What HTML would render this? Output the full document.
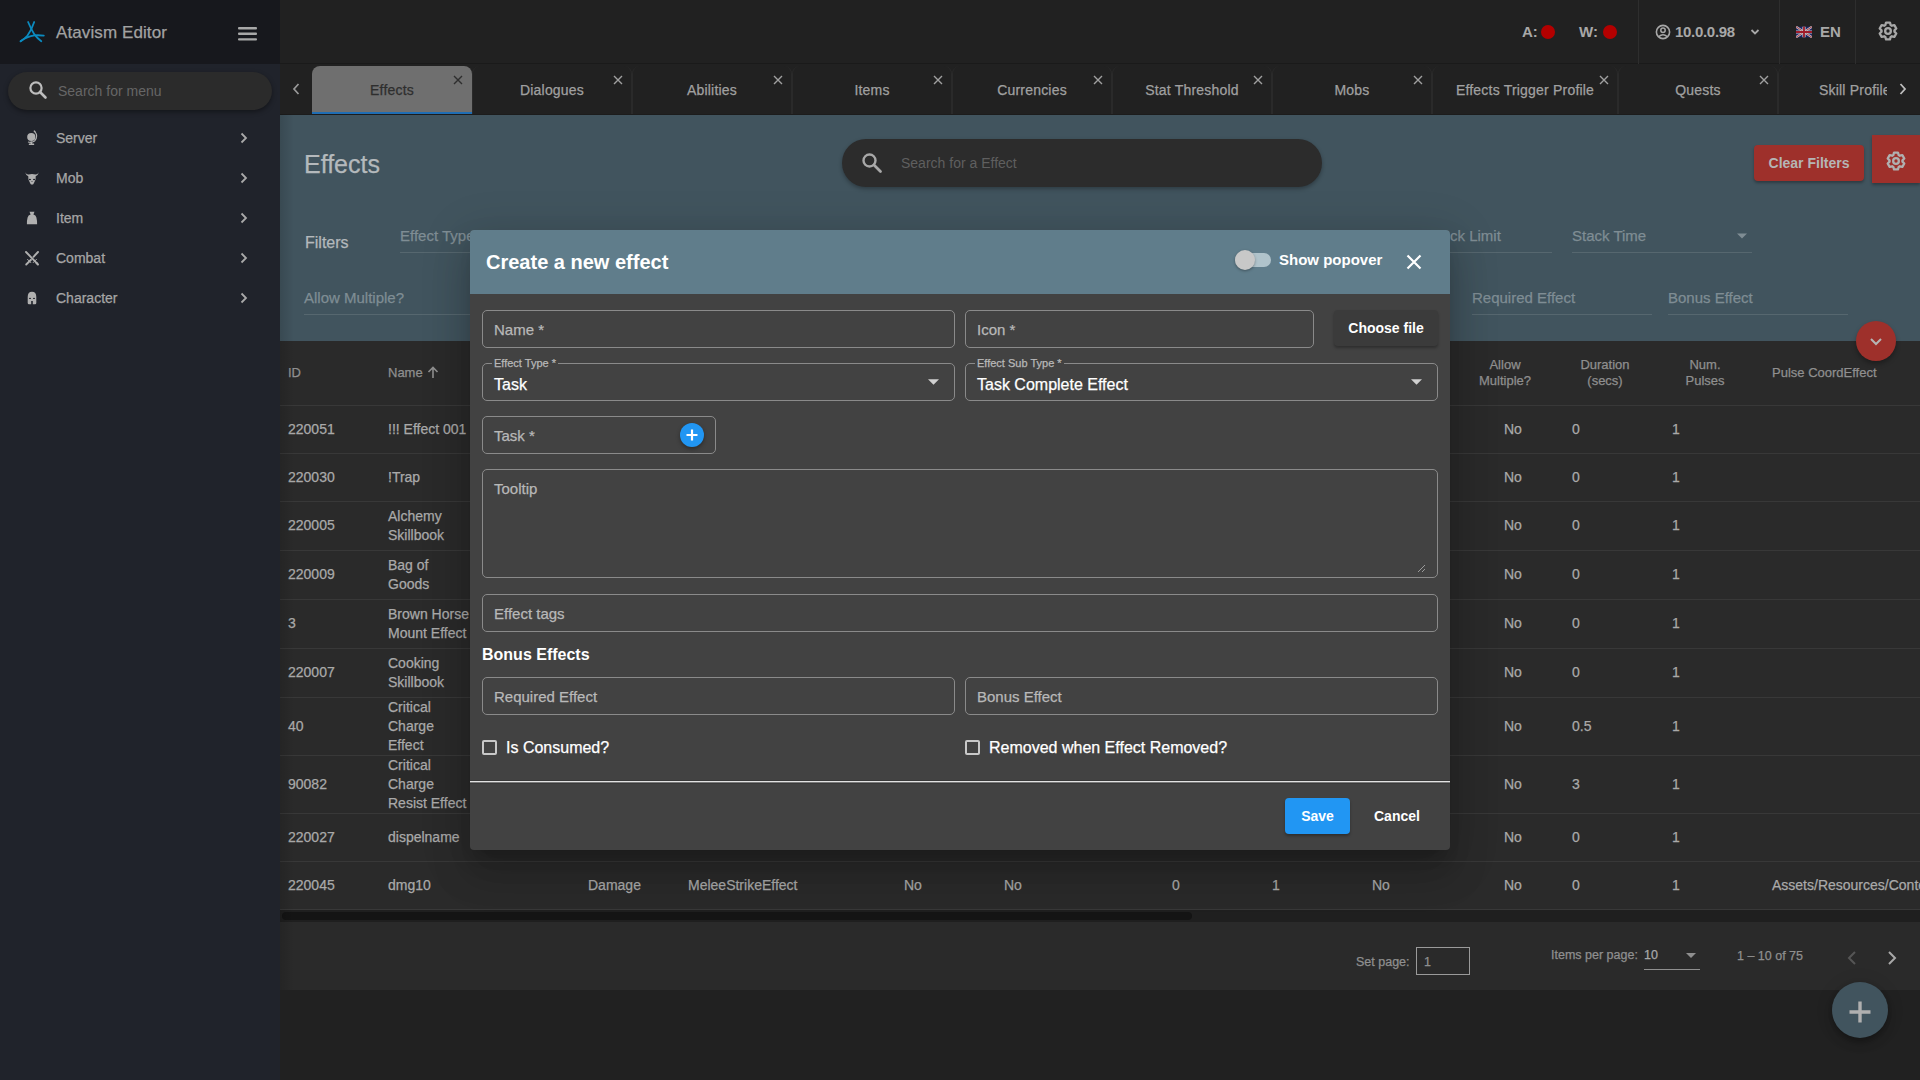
<!DOCTYPE html>
<html><head><meta charset="utf-8">
<style>
*{box-sizing:border-box;margin:0;padding:0}
html,body{width:1920px;height:1080px;overflow:hidden;background:#212121;font-family:"Liberation Sans",sans-serif;-webkit-font-smoothing:antialiased}
.a{position:absolute;white-space:nowrap;line-height:1}
body div{-webkit-text-stroke:0.25px currentColor}
body div[style*="bold"]{-webkit-text-stroke:0}
.mi{position:absolute;left:56px;font-size:14px;color:#a6a6a6;line-height:1;white-space:nowrap}
.vsep{position:absolute;top:0;width:1px;height:64px;background:#2e2e2e}
.tab{position:absolute;top:66px;height:48px;border-radius:8px 8px 0 0;border-left:1px solid #2a2a2a;border-right:1px solid #2a2a2a;background:#212121}
.tl{position:absolute;font-size:14px;color:#a0a0a0;line-height:1;white-space:nowrap;letter-spacing:0.2px}
.rb{position:absolute;left:280px;width:1640px;height:1px;background:#383838}
.td{position:absolute;font-size:14px;color:#a9a9a9;line-height:19px;white-space:nowrap}
.th{position:absolute;font-size:13px;color:#8f8f8f;line-height:16px;white-space:nowrap;text-align:center}
.fld{position:absolute;border:1px solid #8a8a8a;border-radius:5px}
.ph{position:absolute;font-size:15px;color:#b8b8b8;line-height:1;white-space:nowrap}
</style></head><body>
<div class="a" style="left:0;top:0;width:280px;height:1080px;background:#20232b"></div>
<div class="a" style="left:0;top:0;width:280px;height:64px;background:#17181d"></div>
<svg class="a" style="left:15px;top:16px" width="35" height="30" viewBox="15 16 35 30"><g fill="none" stroke="#0b8abf" stroke-width="1.8" stroke-linecap="round"><path d="M28.1 22 Q31 29 34.4 34.4 Q37.5 38.5 41.3 41.2"/><path d="M34.2 22 Q31.8 29.5 27.5 35.5 Q24.5 39 20.6 41.3"/><path d="M20.6 41.3 Q27 36.5 34.5 35.4 Q39 35 43.8 35.7"/></g></svg>
<div class="a" style="left:56px;top:24px;font-size:17px;color:#a2a2a2;letter-spacing:0.1px">Atavism Editor</div>
<svg class="a" style="left:238px;top:27px" width="20" height="14"><g fill="#a8a8a8"><rect x="0" y="0" width="19" height="2.4" rx="1"/><rect x="0" y="5.6" width="19" height="2.4" rx="1"/><rect x="0" y="11.2" width="19" height="2.4" rx="1"/></g></svg>
<div class="a" style="left:8px;top:72px;width:264px;height:38px;border-radius:19px;background:#2b2b2b;box-shadow:0 2px 5px rgba(0,0,0,.4)"></div>
<svg class="a" style="left:28px;top:80px" width="20" height="20" viewBox="0 0 20 20"><circle cx="8" cy="8" r="5.6" fill="none" stroke="#bdbdbd" stroke-width="2.2"/><path d="M12 12 L17.5 17.5" stroke="#bdbdbd" stroke-width="2.6" stroke-linecap="round"/></svg>
<div class="a" style="left:58px;top:84px;font-size:14px;color:#666;-webkit-text-stroke:0">Search for menu</div>
<svg class="a" style="left:20px;top:125px" width="25" height="25" viewBox="20 125 25 25"><g fill="#b0b0b0"><circle cx="31.3" cy="137" r="4.1"/><rect x="30.6" y="141.5" width="1.6" height="2.6"/><rect x="28.8" y="143.6" width="5.4" height="1.5" rx="0.5"/></g><path d="M34.5 131.2 Q38.8 136.5 34.6 141 Q31.5 143 28 142" fill="none" stroke="#b0b0b0" stroke-width="1.1"/><path d="M34 130.6 L35 132" stroke="#b0b0b0" stroke-width="1.4"/></svg>
<div class="mi" style="top:131px">Server</div>
<svg class="a" style="left:240px;top:132px" width="8" height="12" viewBox="0 0 8 12"><path d="M1.5 1.5 L6 6 L1.5 10.5" fill="none" stroke="#a9a9a9" stroke-width="1.8"/></svg>
<svg class="a" style="left:20px;top:165px" width="25" height="25" viewBox="20 165 25 25"><path fill="#b0b0b0" d="M25.2 172.2 Q26 175.5 28.3 176.2 L28.4 179.5 L30.3 183.5 L31 184.4 L33 184.4 L33.7 183.5 L35.6 179.5 L35.7 176.2 Q38 175.5 38.8 172.2 Q37.5 174.6 35.5 174.4 Q32 173.6 28.5 174.4 Q26.5 174.6 25.2 172.2Z"/><g fill="#20232b"><ellipse cx="29.9" cy="179.5" rx="1.1" ry="0.8"/><ellipse cx="34.1" cy="179.5" rx="1.1" ry="0.8"/><rect x="31.4" y="181.2" width="1.2" height="0.6"/></g></svg>
<div class="mi" style="top:171px">Mob</div>
<svg class="a" style="left:240px;top:172px" width="8" height="12" viewBox="0 0 8 12"><path d="M1.5 1.5 L6 6 L1.5 10.5" fill="none" stroke="#a9a9a9" stroke-width="1.8"/></svg>
<svg class="a" style="left:20px;top:205px" width="25" height="25" viewBox="20 205 25 25"><path fill="#b0b0b0" d="M29.5 211.8 L34.5 211.8 L33.4 214.6 Q35.8 215.2 36.4 217.5 Q37.2 220.5 37.1 224.2 L26.9 224.2 Q26.8 220.5 27.6 217.5 Q28.2 215.2 30.6 214.6Z"/></svg>
<div class="mi" style="top:211px">Item</div>
<svg class="a" style="left:240px;top:212px" width="8" height="12" viewBox="0 0 8 12"><path d="M1.5 1.5 L6 6 L1.5 10.5" fill="none" stroke="#a9a9a9" stroke-width="1.8"/></svg>
<svg class="a" style="left:20px;top:245px" width="25" height="25" viewBox="20 245 25 25"><g stroke="#b0b0b0" stroke-linecap="round"><path d="M26 252 L36.5 262.8" stroke-width="1.9"/><path d="M38 252 L33.5 256.8" stroke-width="1.9"/><path d="M31 259.8 L26.2 264.5" stroke-width="1.9"/><path d="M27.6 259.4 L30.8 262.6 M36.4 259.4 L33.2 262.6" stroke-width="1"/><path d="M36.6 263 L37.9 264.4" stroke-width="2.2"/></g></svg>
<div class="mi" style="top:251px">Combat</div>
<svg class="a" style="left:240px;top:252px" width="8" height="12" viewBox="0 0 8 12"><path d="M1.5 1.5 L6 6 L1.5 10.5" fill="none" stroke="#a9a9a9" stroke-width="1.8"/></svg>
<svg class="a" style="left:20px;top:285px" width="25" height="25" viewBox="20 285 25 25"><path fill="#b0b0b0" d="M27.7 297 Q27.7 291.8 32 291.8 Q36.3 291.8 36.3 297 L36.3 303 Q36.3 304.2 35 304.2 L32.8 304.2 L32.8 301 L31.2 301 L31.2 304.2 L29 304.2 Q27.7 304.2 27.7 303Z"/><g fill="#20232b"><ellipse cx="30" cy="298.4" rx="1" ry="0.6"/><ellipse cx="34" cy="298.4" rx="1" ry="0.6"/></g></svg>
<div class="mi" style="top:291px">Character</div>
<svg class="a" style="left:240px;top:292px" width="8" height="12" viewBox="0 0 8 12"><path d="M1.5 1.5 L6 6 L1.5 10.5" fill="none" stroke="#a9a9a9" stroke-width="1.8"/></svg>
<div class="a" style="left:280px;top:0;width:1640px;height:64px;background:#212121"></div>
<div class="a" style="left:280px;top:63px;width:1640px;height:1px;background:#1a1a1a"></div>
<div class="vsep" style="left:1638px"></div>
<div class="vsep" style="left:1779px"></div>
<div class="vsep" style="left:1855px"></div>
<div class="a" style="left:1522px;top:24px;font-size:15px;font-weight:bold;color:#a8a8a8">A:</div>
<div class="a" style="left:1541px;top:25px;width:14px;height:14px;border-radius:50%;background:#b30000"></div>
<div class="a" style="left:1579px;top:24px;font-size:15px;font-weight:bold;color:#a8a8a8">W:</div>
<div class="a" style="left:1603px;top:25px;width:14px;height:14px;border-radius:50%;background:#b30000"></div>
<svg class="a" style="left:1655px;top:24px" width="16" height="16" viewBox="0 0 16 16"><circle cx="8" cy="8" r="6.6" fill="none" stroke="#a8a8a8" stroke-width="1.6"/><circle cx="8" cy="6.2" r="2.2" fill="none" stroke="#a8a8a8" stroke-width="1.5"/><path d="M3.8 12.6 Q8 8.8 12.2 12.6" fill="none" stroke="#a8a8a8" stroke-width="1.5"/></svg>
<div class="a" style="left:1675px;top:24px;font-size:15px;font-weight:bold;color:#a8a8a8;letter-spacing:-0.3px">10.0.0.98</div>
<svg class="a" style="left:1750px;top:28px" width="10" height="8" viewBox="0 0 10 8"><path d="M1.5 2 L5 5.5 L8.5 2" fill="none" stroke="#a8a8a8" stroke-width="1.8"/></svg>
<svg class="a" style="left:1796px;top:26px" width="16" height="12" viewBox="0 0 60 40"><rect width="60" height="40" fill="#1a2466"/><path d="M0 0 L60 40 M60 0 L0 40" stroke="#c8c8c8" stroke-width="8"/><path d="M0 0 L60 40 M60 0 L0 40" stroke="#a01c2a" stroke-width="3"/><path d="M30 0 V40 M0 20 H60" stroke="#c8c8c8" stroke-width="12"/><path d="M30 0 V40 M0 20 H60" stroke="#a01c2a" stroke-width="7"/></svg>
<div class="a" style="left:1820px;top:24px;font-size:15px;font-weight:bold;color:#a8a8a8">EN</div>
<svg class="a" style="left:1878px;top:21px" width="20" height="20" viewBox="0 0 24 24"><path d="M15.17 4.87 L14.34 1.87 L9.66 1.87 L8.83 4.87 L7.42 5.69 L4.39 4.91 L2.05 8.96 L4.24 11.18 L4.24 12.82 L2.05 15.04 L4.39 19.09 L7.42 18.31 L8.83 19.13 L9.66 22.13 L14.34 22.13 L15.17 19.13 L16.58 18.31 L19.61 19.09 L21.95 15.04 L19.76 12.82 L19.76 11.18 L21.95 8.96 L19.61 4.91 L16.58 5.69Z" fill="none" stroke="#a8a8a8" stroke-width="2.8" stroke-linejoin="round"/><circle cx="12" cy="12" r="3.4" fill="none" stroke="#a8a8a8" stroke-width="2.8"/></svg>
<div class="a" style="left:280px;top:64px;width:1640px;height:50px;background:#212121"></div>
<svg class="a" style="left:291px;top:82px" width="10" height="14" viewBox="0 0 10 14"><path d="M7.5 2 L3 7 L7.5 12" fill="none" stroke="#9a9a9a" stroke-width="1.7"/></svg>
<div class="tab" style="left:312px;width:160px;background:#6f6f6f;border:none;"></div>
<div class="tl" style="left:312px;width:160px;top:83px;text-align:center;color:#2e2e2e">Effects</div>
<svg class="a" style="left:453px;top:75px" width="10" height="10" viewBox="0 0 10 10"><path d="M1 1 L9 9 M9 1 L1 9" stroke="#2e2e2e" stroke-width="1.4"/></svg>
<div class="tab" style="left:472px;width:160px;background:#212121;"></div>
<div class="tl" style="left:472px;width:160px;top:83px;text-align:center;color:#a0a0a0">Dialogues</div>
<svg class="a" style="left:613px;top:75px" width="10" height="10" viewBox="0 0 10 10"><path d="M1 1 L9 9 M9 1 L1 9" stroke="#a0a0a0" stroke-width="1.4"/></svg>
<div class="tab" style="left:632px;width:160px;background:#212121;"></div>
<div class="tl" style="left:632px;width:160px;top:83px;text-align:center;color:#a0a0a0">Abilities</div>
<svg class="a" style="left:773px;top:75px" width="10" height="10" viewBox="0 0 10 10"><path d="M1 1 L9 9 M9 1 L1 9" stroke="#a0a0a0" stroke-width="1.4"/></svg>
<div class="tab" style="left:792px;width:160px;background:#212121;"></div>
<div class="tl" style="left:792px;width:160px;top:83px;text-align:center;color:#a0a0a0">Items</div>
<svg class="a" style="left:933px;top:75px" width="10" height="10" viewBox="0 0 10 10"><path d="M1 1 L9 9 M9 1 L1 9" stroke="#a0a0a0" stroke-width="1.4"/></svg>
<div class="tab" style="left:952px;width:160px;background:#212121;"></div>
<div class="tl" style="left:952px;width:160px;top:83px;text-align:center;color:#a0a0a0">Currencies</div>
<svg class="a" style="left:1093px;top:75px" width="10" height="10" viewBox="0 0 10 10"><path d="M1 1 L9 9 M9 1 L1 9" stroke="#a0a0a0" stroke-width="1.4"/></svg>
<div class="tab" style="left:1112px;width:160px;background:#212121;"></div>
<div class="tl" style="left:1112px;width:160px;top:83px;text-align:center;color:#a0a0a0">Stat Threshold</div>
<svg class="a" style="left:1253px;top:75px" width="10" height="10" viewBox="0 0 10 10"><path d="M1 1 L9 9 M9 1 L1 9" stroke="#a0a0a0" stroke-width="1.4"/></svg>
<div class="tab" style="left:1272px;width:160px;background:#212121;"></div>
<div class="tl" style="left:1272px;width:160px;top:83px;text-align:center;color:#a0a0a0">Mobs</div>
<svg class="a" style="left:1413px;top:75px" width="10" height="10" viewBox="0 0 10 10"><path d="M1 1 L9 9 M9 1 L1 9" stroke="#a0a0a0" stroke-width="1.4"/></svg>
<div class="tab" style="left:1432px;width:186px;background:#212121;"></div>
<div class="tl" style="left:1432px;width:186px;top:83px;text-align:center;color:#a0a0a0">Effects Trigger Profile</div>
<svg class="a" style="left:1599px;top:75px" width="10" height="10" viewBox="0 0 10 10"><path d="M1 1 L9 9 M9 1 L1 9" stroke="#a0a0a0" stroke-width="1.4"/></svg>
<div class="tab" style="left:1618px;width:160px;background:#212121;"></div>
<div class="tl" style="left:1618px;width:160px;top:83px;text-align:center;color:#a0a0a0">Quests</div>
<svg class="a" style="left:1759px;top:75px" width="10" height="10" viewBox="0 0 10 10"><path d="M1 1 L9 9 M9 1 L1 9" stroke="#a0a0a0" stroke-width="1.4"/></svg>
<div class="tab" style="left:1778px;width:160px;background:#212121;"></div>
<div class="tl" style="left:1819px;top:83px;color:#a0a0a0">Skill Profile</div>
<div class="a" style="left:312px;top:112px;width:160px;height:2px;background:#1f6db3"></div>
<div class="a" style="left:1887px;top:64px;width:33px;height:50px;background:#212121"></div>
<svg class="a" style="left:1898px;top:82px" width="10" height="14" viewBox="0 0 10 14"><path d="M2.5 2 L7 7 L2.5 12" fill="none" stroke="#bdbdbd" stroke-width="1.8"/></svg>
<div class="a" style="left:280px;top:114px;width:1640px;height:1px;background:#1c1c1c"></div>
<div class="a" style="left:280px;top:115px;width:1640px;height:226px;background:#41545e"></div>
<div class="a" style="left:304px;top:152px;font-size:25px;color:#b4b9bc">Effects</div>
<div class="a" style="left:842px;top:139px;width:480px;height:48px;border-radius:24px;background:#2c2c2c;box-shadow:0 2px 4px rgba(0,0,0,.3)"></div>
<svg class="a" style="left:861px;top:152px" width="22" height="22" viewBox="0 0 22 22"><circle cx="8.5" cy="8.5" r="6" fill="none" stroke="#a8a8a8" stroke-width="2.4"/><path d="M13 13 L19.5 19.5" stroke="#a8a8a8" stroke-width="2.8" stroke-linecap="round"/></svg>
<div class="a" style="left:901px;top:156px;font-size:14px;color:#5f5f5f;-webkit-text-stroke:0">Search for a Effect</div>
<div class="a" style="left:1754px;top:145px;width:110px;height:36px;border-radius:4px;background:#9e302b;box-shadow:0 2px 3px rgba(0,0,0,.3)"></div>
<div class="a" style="left:1754px;top:156px;width:110px;text-align:center;font-size:14px;font-weight:bold;color:#b5b5b5">Clear Filters</div>
<div class="a" style="left:1872px;top:135px;width:48px;height:48px;background:#9e302b;box-shadow:0 2px 3px rgba(0,0,0,.3)"></div>
<svg class="a" style="left:1886px;top:151px" width="20" height="20" viewBox="0 0 24 24"><path d="M15.17 4.87 L14.34 1.87 L9.66 1.87 L8.83 4.87 L7.42 5.69 L4.39 4.91 L2.05 8.96 L4.24 11.18 L4.24 12.82 L2.05 15.04 L4.39 19.09 L7.42 18.31 L8.83 19.13 L9.66 22.13 L14.34 22.13 L15.17 19.13 L16.58 18.31 L19.61 19.09 L21.95 15.04 L19.76 12.82 L19.76 11.18 L21.95 8.96 L19.61 4.91 L16.58 5.69Z" fill="none" stroke="#b0b0b0" stroke-width="2.8" stroke-linejoin="round"/><circle cx="12" cy="12" r="3.4" fill="none" stroke="#b0b0b0" stroke-width="2.8"/></svg>
<div class="a" style="left:305px;top:235px;font-size:16px;color:#b4b9bc">Filters</div>
<div class="a" style="left:400px;top:228px;font-size:15px;color:#7f8d94">Effect Type</div>
<div class="a" style="left:400px;top:252px;width:180px;height:1px;background:#56676f"></div>
<div class="a" style="left:304px;top:290px;font-size:15px;color:#7f8d94">Allow Multiple?</div>
<div class="a" style="left:304px;top:314px;width:180px;height:1px;background:#56676f"></div>
<div class="a" style="left:1450px;top:228px;font-size:15px;color:#7f8d94">ck Limit</div>
<div class="a" style="left:1450px;top:252px;width:102px;height:1px;background:#56676f"></div>
<div class="a" style="left:1572px;top:228px;font-size:15px;color:#7f8d94">Stack Time</div>
<div class="a" style="left:1572px;top:252px;width:180px;height:1px;background:#56676f"></div>
<div class="a" style="left:1472px;top:290px;font-size:15px;color:#7f8d94">Required Effect</div>
<div class="a" style="left:1472px;top:314px;width:180px;height:1px;background:#56676f"></div>
<div class="a" style="left:1668px;top:290px;font-size:15px;color:#7f8d94">Bonus Effect</div>
<div class="a" style="left:1668px;top:314px;width:180px;height:1px;background:#56676f"></div>
<svg class="a" style="left:1737px;top:233px" width="10" height="6" viewBox="0 0 10 5"><path d="M0 0 L10 0 L5 5Z" fill="#7f8d94"/></svg>
<div class="a" style="left:280px;top:341px;width:1640px;height:569px;background:#2a2a2a"></div>
<div class="rb" style="top:405px"></div>
<div class="rb" style="top:453px"></div>
<div class="rb" style="top:501px"></div>
<div class="rb" style="top:550px"></div>
<div class="rb" style="top:599px"></div>
<div class="rb" style="top:648px"></div>
<div class="rb" style="top:697px"></div>
<div class="rb" style="top:755px"></div>
<div class="rb" style="top:813px"></div>
<div class="rb" style="top:861px"></div>
<div class="rb" style="top:909px"></div>
<div class="th" style="left:288px;top:365px;text-align:left">ID</div>
<div class="th" style="left:388px;top:365px;text-align:left">Name</div>
<svg class="a" style="left:427px;top:366px" width="12" height="13" viewBox="0 0 12 13"><path d="M6 12 V2 M1.5 6 L6 1.5 L10.5 6" fill="none" stroke="#8f8f8f" stroke-width="1.6"/></svg>
<div class="th" style="left:1455px;top:357px;width:100px">Allow<br>Multiple?</div>
<div class="th" style="left:1555px;top:357px;width:100px">Duration<br>(secs)</div>
<div class="th" style="left:1655px;top:357px;width:100px">Num.<br>Pulses</div>
<div class="th" style="left:1772px;top:365px;text-align:left">Pulse CoordEffect</div>
<div class="td" style="left:288px;top:419.5px">220051</div>
<div class="td" style="left:388px;top:419.5px">!!! Effect 001</div>
<div class="td" style="left:1504px;top:419.5px">No</div>
<div class="td" style="left:1572px;top:419.5px">0</div>
<div class="td" style="left:1672px;top:419.5px">1</div>
<div class="td" style="left:288px;top:467.5px">220030</div>
<div class="td" style="left:388px;top:467.5px">!Trap</div>
<div class="td" style="left:1504px;top:467.5px">No</div>
<div class="td" style="left:1572px;top:467.5px">0</div>
<div class="td" style="left:1672px;top:467.5px">1</div>
<div class="td" style="left:288px;top:516.0px">220005</div>
<div class="td" style="left:388px;top:506.5px">Alchemy<br>Skillbook</div>
<div class="td" style="left:1504px;top:516.0px">No</div>
<div class="td" style="left:1572px;top:516.0px">0</div>
<div class="td" style="left:1672px;top:516.0px">1</div>
<div class="td" style="left:288px;top:565.0px">220009</div>
<div class="td" style="left:388px;top:555.5px">Bag of<br>Goods</div>
<div class="td" style="left:1504px;top:565.0px">No</div>
<div class="td" style="left:1572px;top:565.0px">0</div>
<div class="td" style="left:1672px;top:565.0px">1</div>
<div class="td" style="left:288px;top:614.0px">3</div>
<div class="td" style="left:388px;top:604.5px">Brown Horse<br>Mount Effect</div>
<div class="td" style="left:1504px;top:614.0px">No</div>
<div class="td" style="left:1572px;top:614.0px">0</div>
<div class="td" style="left:1672px;top:614.0px">1</div>
<div class="td" style="left:288px;top:663.0px">220007</div>
<div class="td" style="left:388px;top:653.5px">Cooking<br>Skillbook</div>
<div class="td" style="left:1504px;top:663.0px">No</div>
<div class="td" style="left:1572px;top:663.0px">0</div>
<div class="td" style="left:1672px;top:663.0px">1</div>
<div class="td" style="left:288px;top:716.5px">40</div>
<div class="td" style="left:388px;top:697.5px">Critical<br>Charge<br>Effect</div>
<div class="td" style="left:1504px;top:716.5px">No</div>
<div class="td" style="left:1572px;top:716.5px">0.5</div>
<div class="td" style="left:1672px;top:716.5px">1</div>
<div class="td" style="left:288px;top:774.5px">90082</div>
<div class="td" style="left:388px;top:755.5px">Critical<br>Charge<br>Resist Effect</div>
<div class="td" style="left:1504px;top:774.5px">No</div>
<div class="td" style="left:1572px;top:774.5px">3</div>
<div class="td" style="left:1672px;top:774.5px">1</div>
<div class="td" style="left:288px;top:827.5px">220027</div>
<div class="td" style="left:388px;top:827.5px">dispelname</div>
<div class="td" style="left:1504px;top:827.5px">No</div>
<div class="td" style="left:1572px;top:827.5px">0</div>
<div class="td" style="left:1672px;top:827.5px">1</div>
<div class="td" style="left:288px;top:875.5px">220045</div>
<div class="td" style="left:388px;top:875.5px">dmg10</div>
<div class="td" style="left:1504px;top:875.5px">No</div>
<div class="td" style="left:1572px;top:875.5px">0</div>
<div class="td" style="left:1672px;top:875.5px">1</div>
<div class="td" style="left:588px;top:875.5px">Damage</div>
<div class="td" style="left:688px;top:875.5px">MeleeStrikeEffect</div>
<div class="td" style="left:904px;top:875.5px">No</div>
<div class="td" style="left:1004px;top:875.5px">No</div>
<div class="td" style="left:1172px;top:875.5px">0</div>
<div class="td" style="left:1272px;top:875.5px">1</div>
<div class="td" style="left:1372px;top:875.5px">No</div>
<div class="td" style="left:1772px;top:875.5px">Assets/Resources/Content/Effects</div>
<div class="a" style="left:280px;top:910px;width:1640px;height:12px;background:#1f1f1f"></div>
<div class="a" style="left:282px;top:912px;width:910px;height:8px;border-radius:4px;background:#141414"></div>
<div class="a" style="left:280px;top:922px;width:1640px;height:68px;background:#2a2a2a"></div>
<div class="a" style="left:1356px;top:956px;font-size:12.5px;color:#8f8f8f">Set page:</div>
<div class="a" style="left:1416px;top:947px;width:54px;height:28px;border:1px solid #9a9a9a"></div>
<div class="a" style="left:1424px;top:956px;font-size:12.5px;color:#8f8f8f">1</div>
<div class="a" style="left:1551px;top:949px;font-size:12.5px;color:#8f8f8f">Items per page:</div>
<div class="a" style="left:1644px;top:949px;font-size:12.5px;color:#a8a8a8">10</div>
<svg class="a" style="left:1686px;top:953px" width="10" height="5" viewBox="0 0 10 5"><path d="M0 0 L10 0 L5 5Z" fill="#8f8f8f"/></svg>
<div class="a" style="left:1644px;top:969px;width:56px;height:1px;background:#8f8f8f"></div>
<div class="a" style="left:1737px;top:950px;font-size:12.5px;color:#8f8f8f">1 – 10 of 75</div>
<svg class="a" style="left:1846px;top:950px" width="12" height="16" viewBox="0 0 12 16"><path d="M9 2 L3 8 L9 14" fill="none" stroke="#555" stroke-width="2"/></svg>
<svg class="a" style="left:1886px;top:950px" width="12" height="16" viewBox="0 0 12 16"><path d="M3 2 L9 8 L3 14" fill="none" stroke="#a8a8a8" stroke-width="2"/></svg>
<div class="a" style="left:1832px;top:982px;width:56px;height:56px;border-radius:50%;background:#41545e;box-shadow:0 3px 5px -1px rgba(0,0,0,.2),0 6px 10px 0 rgba(0,0,0,.14),0 1px 18px 0 rgba(0,0,0,.12)"></div>
<svg class="a" style="left:1849px;top:1001px" width="22" height="22" viewBox="0 0 22 22"><path d="M11 0.5 V21.5 M0.5 11 H21.5" stroke="#b0b0b0" stroke-width="3.4"/></svg>
<div class="a" style="left:1856px;top:321px;width:40px;height:40px;border-radius:50%;background:#9e302b;box-shadow:0 3px 5px rgba(0,0,0,.3)"></div>
<svg class="a" style="left:1869px;top:337px" width="14" height="10" viewBox="0 0 14 10"><path d="M2 2 L7 7 L12 2" fill="none" stroke="#b5b5b5" stroke-width="2"/></svg>
<div class="a" style="left:280px;top:114px;width:14px;height:876px;background:linear-gradient(to right,rgba(0,0,0,.13),rgba(0,0,0,0))"></div>
<div class="a" style="left:470px;top:230px;width:980px;height:620px;background:#424242;border-radius:4px;box-shadow:0 11px 15px -7px rgba(0,0,0,.2),0 24px 38px 3px rgba(0,0,0,.14),0 9px 46px 8px rgba(0,0,0,.12)"></div>
<div class="a" style="left:470px;top:230px;width:980px;height:64px;background:#607d8b;border-radius:4px 4px 0 0"></div>
<div class="a" style="left:486px;top:252px;font-size:20px;font-weight:bold;color:#ffffff">Create a new effect</div>
<div class="a" style="left:1235px;top:253px;width:36px;height:14px;border-radius:7px;background:#b0c3cb"></div>
<div class="a" style="left:1235px;top:250px;width:20px;height:20px;border-radius:50%;background:#c8c8c8;box-shadow:0 1px 3px rgba(0,0,0,.35)"></div>
<div class="a" style="left:1279px;top:252px;font-size:15px;font-weight:bold;color:#ffffff">Show popover</div>
<svg class="a" style="left:1406px;top:254px" width="16" height="16" viewBox="0 0 16 16"><path d="M1.5 1.5 L14.5 14.5 M14.5 1.5 L1.5 14.5" stroke="#ffffff" stroke-width="2.2"/></svg>
<div class="fld" style="left:482px;top:310px;width:473px;height:38px"></div>
<div class="ph" style="left:494px;top:322px">Name *</div>
<div class="fld" style="left:965px;top:310px;width:349px;height:38px"></div>
<div class="ph" style="left:977px;top:322px">Icon *</div>
<div class="a" style="left:1334px;top:310px;width:104px;height:36px;border-radius:4px;background:#3b3b3b;box-shadow:0 2px 3px rgba(0,0,0,.3)"></div>
<div class="a" style="left:1334px;top:321px;width:104px;text-align:center;font-size:14px;font-weight:bold;color:#ffffff">Choose file</div>
<div class="fld" style="left:482px;top:363px;width:473px;height:38px"></div>
<div class="a" style="left:492px;top:357px;height:12px;padding:0 2px;background:#424242;font-size:11px;color:#b8b8b8;line-height:12px">Effect Type *</div>
<div class="a" style="left:494px;top:377px;font-size:16px;color:#ffffff">Task</div>
<svg class="a" style="left:928px;top:379px" width="11" height="6" viewBox="0 0 10 5"><path d="M0 0 L10 0 L5 5Z" fill="#d0d0d0"/></svg>
<div class="fld" style="left:965px;top:363px;width:473px;height:38px"></div>
<div class="a" style="left:975px;top:357px;height:12px;padding:0 2px;background:#424242;font-size:11px;color:#b8b8b8;line-height:12px">Effect Sub Type *</div>
<div class="a" style="left:977px;top:377px;font-size:16px;color:#ffffff">Task Complete Effect</div>
<svg class="a" style="left:1411px;top:379px" width="11" height="6" viewBox="0 0 10 5"><path d="M0 0 L10 0 L5 5Z" fill="#d0d0d0"/></svg>
<div class="fld" style="left:482px;top:416px;width:234px;height:38px"></div>
<div class="ph" style="left:494px;top:428px">Task *</div>
<div class="a" style="left:680px;top:423px;width:24px;height:24px;border-radius:50%;background:#2196f3;box-shadow:0 2px 4px rgba(0,0,0,.35)"></div>
<svg class="a" style="left:684px;top:427px" width="16" height="16" viewBox="0 0 16 16"><path d="M8 2.5 V13.5 M2.5 8 H13.5" stroke="#fff" stroke-width="2.2"/></svg>
<div class="fld" style="left:482px;top:469px;width:956px;height:109px"></div>
<div class="ph" style="left:494px;top:481px">Tooltip</div>
<svg class="a" style="left:1416px;top:563px" width="10" height="10" viewBox="0 0 10 10"><path d="M9 2 L2 9 M9 6 L6 9" stroke="#9a9a9a" stroke-width="1"/></svg>
<div class="fld" style="left:482px;top:594px;width:956px;height:38px"></div>
<div class="ph" style="left:494px;top:606px">Effect tags</div>
<div class="a" style="left:482px;top:647px;font-size:16px;font-weight:bold;color:#ffffff">Bonus Effects</div>
<div class="fld" style="left:482px;top:677px;width:473px;height:38px"></div>
<div class="ph" style="left:494px;top:689px">Required Effect</div>
<div class="fld" style="left:965px;top:677px;width:473px;height:38px"></div>
<div class="ph" style="left:977px;top:689px">Bonus Effect</div>
<div class="a" style="left:482px;top:740px;width:15px;height:15px;border:2px solid #c8c8c8;border-radius:2px"></div>
<div class="a" style="left:506px;top:740px;font-size:16px;color:#ffffff">Is Consumed?</div>
<div class="a" style="left:965px;top:740px;width:15px;height:15px;border:2px solid #c8c8c8;border-radius:2px"></div>
<div class="a" style="left:989px;top:740px;font-size:16px;color:#ffffff">Removed when Effect Removed?</div>
<div class="a" style="left:470px;top:780px;width:980px;height:1px;background:#393939"></div>
<div class="a" style="left:470px;top:781px;width:980px;height:1px;background:#e2e2e2"></div>
<div class="a" style="left:470px;top:782px;width:980px;height:1px;background:#7a7a7a"></div>
<div class="a" style="left:470px;top:783px;width:980px;height:1px;background:#3a3a3a"></div>
<div class="a" style="left:1285px;top:798px;width:65px;height:36px;border-radius:4px;background:#2196f3;box-shadow:0 2px 3px rgba(0,0,0,.3)"></div>
<div class="a" style="left:1285px;top:809px;width:65px;text-align:center;font-size:14px;font-weight:bold;color:#ffffff">Save</div>
<div class="a" style="left:1374px;top:809px;font-size:14px;font-weight:bold;color:#ffffff">Cancel</div>
</body></html>
